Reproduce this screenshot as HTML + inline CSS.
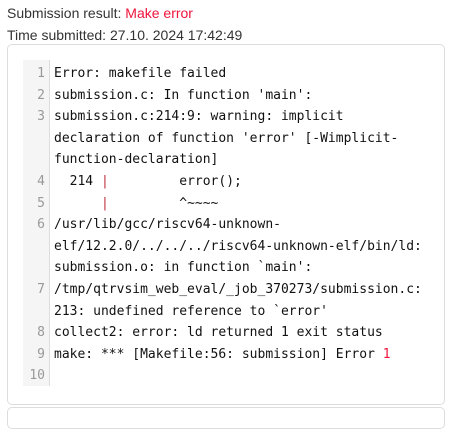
<!DOCTYPE html>
<html><head><style>
body{margin:0;background:#fff;font-family:"Liberation Sans",sans-serif;color:#333;}
.h{position:absolute;left:7px;font-size:14px;}
.red{color:#f0143c;}
.box{position:absolute;left:7px;top:44px;width:436px;height:359px;border:1px solid #ddd;border-radius:5px;}
.box2{position:absolute;left:7px;top:407px;width:436px;height:20px;border:1px solid #ddd;border-radius:5px;background:#fff}
.gut{position:absolute;left:23px;top:60px;width:26px;height:326px;background:#f5f5f5;border-right:1px solid #ddd;}
.code{position:absolute;left:23px;top:63px;font-family:"DejaVu Sans Mono",monospace;font-size:13px;line-height:21.6px;color:#111;}
.r{display:flex}
.n{width:22px;text-align:right;color:#999;padding-right:9px;flex:none}
.t{width:380px;white-space:pre-wrap;word-break:break-word}
.bar{color:#c03040}
</style></head><body>
<div class="h" style="top:5px">Submission result: <span class="red">Make error</span></div>
<div class="h" style="top:27px">Time submitted: 27.10. 2024 17:42:49</div>
<div class="box"></div>
<div class="box2"></div>
<div class="gut"></div>
<div class="code">
<div class="r"><span class="n">1</span><span class="t">Error: makefile failed</span></div>
<div class="r"><span class="n">2</span><span class="t">submission.c: In function 'main':</span></div>
<div class="r"><span class="n">3</span><span class="t">submission.c:214:9: warning: implicit<br>declaration of function 'error' [-Wimplicit-<br>function-declaration]</span></div>
<div class="r"><span class="n">4</span><span class="t">  214 <span class="bar">|</span>         error();</span></div>
<div class="r"><span class="n">5</span><span class="t">      <span class="bar">|</span>         ^~~~~</span></div>
<div class="r"><span class="n">6</span><span class="t">/usr/lib/gcc/riscv64-unknown-<br>elf/12.2.0/../../../riscv64-unknown-elf/bin/ld:<br>submission.o: in function `main':</span></div>
<div class="r"><span class="n">7</span><span class="t">/tmp/qtrvsim_web_eval/_job_370273/submission.c:<br>213: undefined reference to `error'</span></div>
<div class="r"><span class="n">8</span><span class="t">collect2: error: ld returned 1 exit status</span></div>
<div class="r"><span class="n">9</span><span class="t">make: *** [Makefile:56: submission] Error <span class="red">1</span></span></div>
<div class="r"><span class="n">10</span><span class="t"> </span></div>
</div>
</body></html>
